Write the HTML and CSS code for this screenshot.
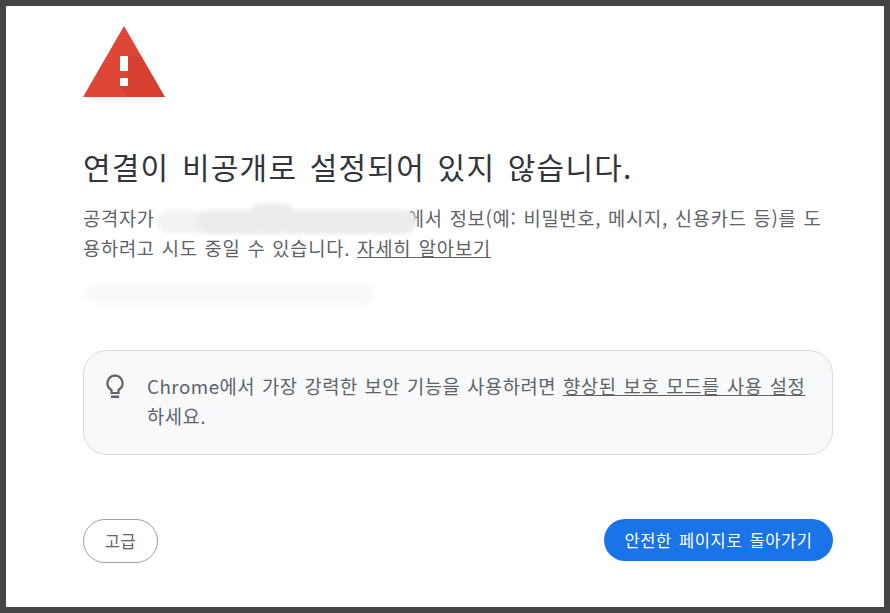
FILE: index.html
```html
<!DOCTYPE html>
<html lang="ko">

<head>
    <meta charset="UTF-8">
    <title>개인 정보 보호 오류</title>
    <link rel="stylesheet" href="styles.css">
</head>

<body>
    <div class="frame">
        <!-- Warning icon -->
        <svg class="warning-icon" viewBox="0 0 82 72" width="82" height="72">
            <path d="M41 0 L82 71 L0 71 Z" fill="#de4738" />
            <path d="M45 30 L58 30 L82 71 L45 71 L37 60 L45 60 Z" fill="#b5291c" opacity="0.22" />
            <rect x="37" y="30" width="8" height="15" fill="#fff" />
            <rect x="37" y="52" width="8" height="8" fill="#fff" />
        </svg>

        <h1 class="title">연결이 비공개로 설정되어 있지 않습니다.</h1>

        <p class="message">
            공격자가<span class="redacted"><i class="blob blob-a"></i><i class="blob blob-b"></i><i class="blob blob-c"></i></span>에서 정보(예: 비밀번호, 메시지, 신용카드 등)를 도<br>
            용하려고 시도 중일 수 있습니다. <a href="#">자세히 알아보기</a>
        </p>

        <div class="error-code"></div>

        <!-- Enhanced protection hint -->
        <div class="hint">
            <svg class="hint-icon" viewBox="0 0 18 25" width="18" height="25">
                <path d="M5.500 16 A7.600 7.600 0 1 1 12.500 16 V19 H5.500 Z" fill="none" stroke="#5f6368" stroke-width="2.200" />
                <rect x="5" y="21.500" width="8" height="2.500" fill="#5f6368" />
            </svg>
            <p>Chrome에서 가장 강력한 보안 기능을 사용하려면 <a href="#">향상된 보호 모드를 사용 설정</a><br>하세요.</p>
        </div>

        <div class="actions">
            <button class="btn btn-outline">고급</button>
            <button class="btn btn-primary">안전한 페이지로 돌아가기</button>
        </div>
    </div>
</body>

</html>
```

FILE: styles.css
```css
/* General Styles */
html,
body {
    margin: 0;
    padding: 0;
    height: 100%;
}

body {
    font-family: "Noto Sans CJK KR", "Liberation Sans", sans-serif;
    background: #fff;
    color: #5f6368;
}

.frame {
    box-sizing: border-box;
    height: 100vh;
    border: 6px solid #444;
    padding: 20px 51px 0 77px;
    display: flex;
    flex-direction: column;
}

.warning-icon {
    display: block;
}

.title {
    margin: 48px 0 0;
    font-size: 30px;
    line-height: 40px;
    font-weight: 400;
    letter-spacing: 1.200px;
    word-spacing: 3px;
    color: #333538;
}

.message {
    margin: 17px 0 0;
    font-size: 18.750px;
    line-height: 30px;
    letter-spacing: 0.700px;
    word-spacing: 1px;
}

.message a,
.hint a {
    color: #5f6368;
    text-decoration: underline;
}

.message a {
    letter-spacing: 0.900px;
}

/* Blurred out address */
.redacted {
    display: inline-block;
    position: relative;
    width: 252px;
    height: 20px;
    vertical-align: middle;
}

.blob {
    position: absolute;
    background: #ececec;
    filter: blur(2px);
    border-radius: 10px;
}

.blob-a {
    left: 2px;
    right: -8px;
    top: 0;
    height: 22px;
    background: #f2f2f2;
}

.blob-b {
    left: 42px;
    right: -8px;
    top: 0;
    height: 22px;
}

.blob-c {
    left: 96px;
    width: 42px;
    top: -8px;
    height: 18px;
}

.error-code {
    margin: 21px 0 0 3px;
    width: 288px;
    height: 20px;
    background: #f9f9f9;
    border-radius: 10px;
    filter: blur(2px);
}

.hint {
    box-sizing: border-box;
    display: flex;
    gap: 23px;
    margin-top: 46px;
    height: 105px;
    padding: 20px 20px 0 22px;
    background: #f8f9fa;
    border: 1px solid #dadce0;
    border-radius: 24px;
}

.hint-icon {
    flex: none;
    margin-top: 3px;
}

.hint p {
    margin: 0;
    font-size: 18.750px;
    line-height: 30px;
    letter-spacing: 0.500px;
    word-spacing: 1.200px;
    white-space: nowrap;
}

.hint a {
    letter-spacing: 0.600px;
}

.actions {
    display: flex;
    justify-content: space-between;
    align-items: flex-start;
    margin-top: 64px;
}

.btn {
    font-family: inherit;
    font-size: 16.500px;
    letter-spacing: 0.600px;
    word-spacing: 2px;
    border-radius: 22px;
    cursor: pointer;
    padding: 0;
}

.btn-outline {
    width: 75px;
    height: 44px;
    background: #fff;
    color: #5f6368;
    border: 1px solid #a0a0a0;
}

.btn-primary {
    width: 229px;
    height: 42px;
    background: #1a73e8;
    color: #fff;
    border: none;
}
```
